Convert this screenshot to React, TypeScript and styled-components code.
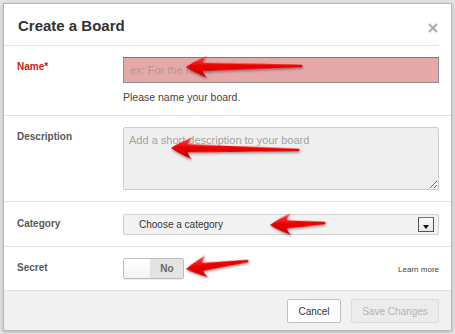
import React from "react";
import styled, { createGlobalStyle } from "styled-components";

const GlobalStyle = createGlobalStyle`
  html, body {
    margin: 0;
    padding: 0;
    background: #e4e5e6;
    font-family: "Liberation Sans", Arial, sans-serif;
  }
`;

const Page = styled.div`
  position: relative;
  width: 455px;
  height: 334px;
  overflow: hidden;
  padding: 3px 0 0 3px;
  box-sizing: border-box;
`;

const Modal = styled.div`
  width: 449px;
  box-sizing: border-box;
  background: #fff;
  border: 1px solid #b9b9b9;
  box-shadow: 0 1px 4px rgba(0, 0, 0, 0.25);
`;

const Header = styled.div`
  height: 42px;
  box-sizing: border-box;
  margin-right: 12px;
  padding: 13px 1px 0 14px;
  border-bottom: 1px solid #e2e2e2;
  display: flex;
  justify-content: space-between;
  align-items: flex-start;
`;

const Title = styled.h1`
  margin: 0;
  font-size: 15px;
  line-height: 17px;
  font-weight: bold;
  color: #333;
`;

const Close = styled.button`
  border: none;
  background: none;
  padding: 0;
  margin-top: 6px;
  width: 10px;
  height: 10px;
  display: flex;
  cursor: pointer;
`;

const Row = styled.div<{ $pt: number; $pb: number }>`
  display: grid;
  grid-template-columns: 106px 1fr;
  padding: ${(p) => p.$pt}px 12px ${(p) => p.$pb}px 13px;
  border-bottom: 1px solid #e2e2e2;
`;

const Label = styled.label<{ $required?: boolean }>`
  padding-top: 4px;
  font-size: 10px;
  line-height: 12px;
  font-weight: bold;
  color: ${(p) => (p.$required ? "#cc2020" : "#585858")};
`;

const Field = styled.div`
  display: flex;
  flex-direction: column;
`;

const NameInput = styled.input`
  display: block;
  width: 100%;
  height: 26px;
  box-sizing: border-box;
  margin: 0;
  padding: 0 6px;
  border: 1px solid #8f8f8f;
  border-top-color: #7a7a7a;
  background: #e5a9aa;
  font-family: inherit;
  font-size: 11px;
  color: #333;
  &::placeholder {
    color: #b59697;
  }
`;

const Help = styled.p`
  margin: 8px 0 0;
  font-size: 10.5px;
  line-height: 13px;
  color: #444;
`;

const TextArea = styled.textarea`
  display: block;
  width: 100%;
  height: 63px;
  box-sizing: border-box;
  margin: 0;
  padding: 5px 5px;
  border: 1px solid #cfcfcf;
  border-radius: 2px;
  background: #efefef;
  font-family: inherit;
  font-size: 11px;
  line-height: 14px;
  color: #333;
  &::placeholder {
    color: #a3a3a3;
  }
`;

const Select = styled.div`
  height: 21px;
  box-sizing: border-box;
  border: 1px solid #d2d2d2;
  border-radius: 2px;
  background: #f2f2f2;
  display: flex;
  align-items: center;
  justify-content: space-between;
  padding: 0 4px 0 15px;
  font-size: 10px;
  color: #333;
`;

const DropBox = styled.span`
  width: 16px;
  height: 15px;
  box-sizing: border-box;
  border: 1px solid #555;
  border-top-color: #777;
  background: linear-gradient(#fbfbfb, #e8e8e8);
  display: flex;
  align-items: flex-end;
  justify-content: center;
  padding-bottom: 2px;
  &::after {
    content: "";
    border-left: 3px solid transparent;
    border-right: 3px solid transparent;
    border-top: 4px solid #111;
  }
`;

const SecretLine = styled.div`
  display: flex;
  align-items: center;
  justify-content: space-between;
`;

const Toggle = styled.div`
  width: 61px;
  height: 21px;
  box-sizing: border-box;
  border: 1px solid #bdbdbd;
  border-radius: 2px;
  display: flex;
  overflow: hidden;
  box-shadow: 0 1px 1px rgba(0, 0, 0, 0.08);
`;

const Knob = styled.span`
  width: 26px;
  background: linear-gradient(#ffffff, #f3f3f3);
  border-right: 1px solid #e0e0e0;
`;

const ToggleText = styled.span`
  flex: 1;
  background: #e4e4e4;
  display: flex;
  align-items: center;
  justify-content: center;
  font-size: 10px;
  font-weight: bold;
  color: #666;
`;

const LearnMore = styled.a`
  font-size: 8px;
  color: #444;
  text-decoration: none;
  margin-top: 1px;
`;

const Footer = styled.div`
  background: #f1f1f1;
  padding: 8px 12px 7px 0;
  display: flex;
  justify-content: flex-end;
  gap: 10px;
`;

const Button = styled.button<{ $disabled?: boolean }>`
  height: 24px;
  box-sizing: border-box;
  padding: 0;
  width: ${(p) => (p.$disabled ? 88 : 54)}px;
  border: 1px solid ${(p) => (p.$disabled ? "#dcdcdc" : "#c2c2c2")};
  border-radius: 2px;
  background: ${(p) => (p.$disabled ? "#ececec" : "#fff")};
  color: ${(p) => (p.$disabled ? "#b4b4b4" : "#333")};
  font-family: inherit;
  font-size: 10px;
  cursor: ${(p) => (p.$disabled ? "default" : "pointer")};
`;

const Overlay = styled.svg`
  position: absolute;
  left: 0;
  top: 0;
  pointer-events: none;
`;

const arrows = [
  { tip: [186, 67], tail: [302, 66] },
  { tip: [171, 148], tail: [299, 150] },
  { tip: [270, 225], tail: [325, 223] },
  { tip: [186, 269], tail: [248, 261] },
];

const Arrow = ({ tip, tail }: { tip: number[]; tail: number[] }) => {
  const dx = tail[0] - tip[0];
  const dy = tail[1] - tip[1];
  const len = Math.sqrt(dx * dx + dy * dy);
  const angle = (Math.atan2(dy, dx) * 180) / Math.PI;
  const d = `M0 0 Q7 -5 21 -11 Q17 -7 17 -4 L${len} -1.2 Q${len + 1} 0 ${len} 1.2 L17 4 Q17 7 21 11 Q7 5 0 0 Z`;
  return (
    <g transform={`translate(${tip[0]} ${tip[1]}) rotate(${angle})`}>
      <path d={d} fill="url(#arrowRed)" filter="url(#arrowShadow)" />
    </g>
  );
};

export default function App() {
  return (
    <>
      <GlobalStyle />
      <Page>
        <Modal>
          <Header>
            <Title>Create a Board</Title>
            <Close aria-label="Close">
              <svg width="10" height="10" viewBox="0 0 10 10">
                <path d="M1 1L9 9M9 1L1 9" stroke="#adadad" strokeWidth="2" />
              </svg>
            </Close>
          </Header>
          <Row $pt={11} $pb={11}>
            <Label $required>Name*</Label>
            <Field>
              <NameInput placeholder="ex: For the home" />
              <Help>Please name your board.</Help>
            </Field>
          </Row>
          <Row $pt={11} $pb={11}>
            <Label>Description</Label>
            <TextArea placeholder="Add a short description to your board" />
          </Row>
          <Row $pt={12} $pb={11}>
            <Label>Category</Label>
            <Select>
              <span>Choose a category</span>
              <DropBox />
            </Select>
          </Row>
          <Row $pt={11} $pb={11}>
            <Label>Secret</Label>
            <SecretLine>
              <Toggle>
                <Knob />
                <ToggleText>No</ToggleText>
              </Toggle>
              <LearnMore href="#">Learn more</LearnMore>
            </SecretLine>
          </Row>
          <Footer>
            <Button>Cancel</Button>
            <Button $disabled>Save Changes</Button>
          </Footer>
        </Modal>
        <Overlay width="455" height="334" viewBox="0 0 455 334">
          <defs>
            <linearGradient id="arrowRed" x1="0" y1="0" x2="0" y2="1">
              <stop offset="0" stopColor="#ff4a4a" />
              <stop offset="0.45" stopColor="#f00000" />
              <stop offset="1" stopColor="#b80000" />
            </linearGradient>
            <filter id="arrowShadow" x="-20%" y="-50%" width="140%" height="200%">
              <feDropShadow dx="0.5" dy="1.5" stdDeviation="1" floodColor="#000" floodOpacity="0.4" />
            </filter>
          </defs>
          {arrows.map((a, i) => (
            <Arrow key={i} tip={a.tip} tail={a.tail} />
          ))}
        </Overlay>
      </Page>
    </>
  );
}
